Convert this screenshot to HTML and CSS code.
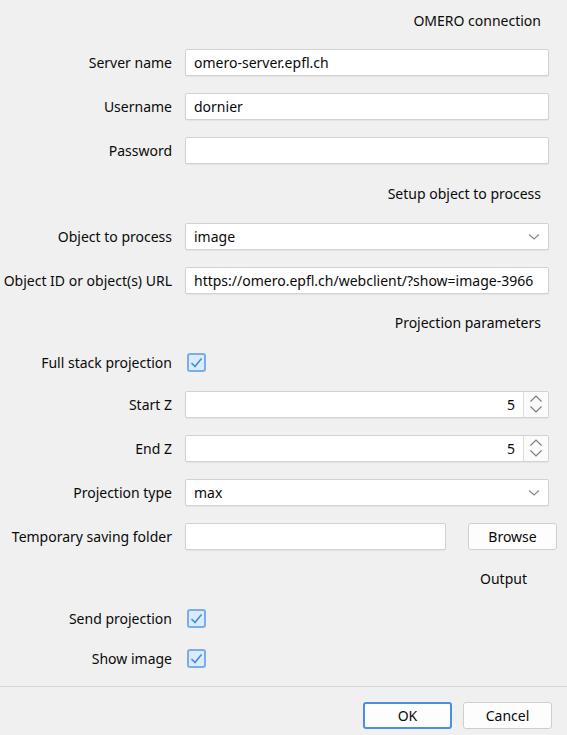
FILE: index.html
```html
<!DOCTYPE html>
<html lang="en">
<head>
  <meta charset="UTF-8" />
  <title>OMERO projection</title>
  <link rel="stylesheet" href="styles.css">
</head>
<body>
  <div class="panel">
    <div class="heading">OMERO connection</div>

    <div class="row">
      <label for="server">Server name</label>
      <input id="server" class="field" value="omero-server.epfl.ch" />
    </div>
    <div class="row">
      <label for="user">Username</label>
      <input id="user" class="field" value="dornier" />
    </div>
    <div class="row">
      <label for="pass">Password</label>
      <input id="pass" class="field" type="password" value="" />
    </div>

    <div class="heading heading-tall">Setup object to process</div>

    <div class="row">
      <label>Object to process</label>
      <div class="field select">
        <span>image</span>
        <svg class="chevron" width="12" height="8" viewBox="0 0 12 8"><path d="M1 1.5 L6 6 L11 1.5" fill="none" stroke="#8a8a8a" stroke-width="1.2"/></svg>
      </div>
    </div>
    <div class="row">
      <label for="url">Object ID or object(s) URL</label>
      <input id="url" class="field" value="https://omero.epfl.ch/webclient/?show=image-3966" />
    </div>

    <div class="heading">Projection parameters</div>

    <div class="row row-check">
      <label>Full stack projection</label>
      <span class="check"><svg width="13" height="11" viewBox="0 0 13 11"><path d="M1.5 6 L5 9.5 L11.5 1.5" fill="none" stroke="#3d8ee6" stroke-width="1.6"/></svg></span>
    </div>
    <div class="row">
      <label>Start Z</label>
      <div class="field spinner">
        <span class="num">5</span>
        <span class="spin-btn">
          <svg width="14" height="22" viewBox="0 0 14 22"><path d="M1.5 8.5 L7 3 L12.5 8.5 M1.5 13.5 L7 19 L12.5 13.5" fill="none" stroke="#7a7a7a" stroke-width="1.1"/></svg>
        </span>
      </div>
    </div>
    <div class="row">
      <label>End Z</label>
      <div class="field spinner">
        <span class="num">5</span>
        <span class="spin-btn">
          <svg width="14" height="22" viewBox="0 0 14 22"><path d="M1.5 8.5 L7 3 L12.5 8.5 M1.5 13.5 L7 19 L12.5 13.5" fill="none" stroke="#7a7a7a" stroke-width="1.1"/></svg>
        </span>
      </div>
    </div>
    <div class="row">
      <label>Projection type</label>
      <div class="field select">
        <span>max</span>
        <svg class="chevron" width="12" height="8" viewBox="0 0 12 8"><path d="M1 1.5 L6 6 L11 1.5" fill="none" stroke="#8a8a8a" stroke-width="1.2"/></svg>
      </div>
    </div>
    <div class="row">
      <label for="folder">Temporary saving folder</label>
      <div class="folder">
        <input id="folder" class="field" value="" />
        <button class="btn">Browse</button>
      </div>
    </div>

    <div class="heading heading-output">Output</div>

    <div class="row row-check">
      <label>Send projection</label>
      <span class="check"><svg width="13" height="11" viewBox="0 0 13 11"><path d="M1.5 6 L5 9.5 L11.5 1.5" fill="none" stroke="#3d8ee6" stroke-width="1.6"/></svg></span>
    </div>
    <div class="row row-check">
      <label>Show image</label>
      <span class="check"><svg width="13" height="11" viewBox="0 0 13 11"><path d="M1.5 6 L5 9.5 L11.5 1.5" fill="none" stroke="#3d8ee6" stroke-width="1.6"/></svg></span>
    </div>
  </div>

  <div class="footer">
    <button class="btn btn-default">OK</button>
    <button class="btn">Cancel</button>
  </div>
</body>
</html>
```

FILE: styles.css
```css
body {
  margin: 0;
  background: #f0f0f0;
  font-family: "Noto Sans", "Open Sans", sans-serif;
  font-size: 14px;
  color: #0a0a0a;
  width: 567px;
  height: 735px;
  overflow: hidden;
}

.panel {
  padding: 0 18px 8px 0;
  display: flex;
  flex-direction: column;
}

.heading {
  height: 40px;
  display: flex;
  align-items: center;
  justify-content: flex-end;
  padding-right: 8px;
}

.heading-tall {
  height: 42px;
}

.heading-output {
  padding-right: 22px;
}

.row {
  height: 44px;
  display: grid;
  grid-template-columns: 172px 1fr;
  column-gap: 13px;
  align-items: center;
}

.row-check {
  height: 40px;
}

.row label {
  text-align: right;
  white-space: nowrap;
}

.field {
  box-sizing: border-box;
  height: 27px;
  width: 100%;
  margin: 0;
  padding: 0 8px;
  border: 1px solid #d2d2d2;
  border-radius: 2px;
  background: #fff;
  font: inherit;
  color: #0a0a0a;
  box-shadow: 0 1px 1px rgba(0, 0, 0, 0.05);
  outline: none;
}

.select {
  display: flex;
  align-items: center;
  justify-content: space-between;
  padding-right: 8px;
}

.chevron {
  margin-top: 1px;
}

.spinner {
  display: flex;
  align-items: center;
  padding: 0;
}

.spinner .num {
  flex: 1;
  text-align: right;
  padding-right: 8px;
}

.spin-btn {
  width: 24px;
  height: 100%;
  border-left: 1px solid #dcdcdc;
  background: #fbfbfb;
  display: flex;
  align-items: center;
  justify-content: center;
}

.check {
  box-sizing: border-box;
  width: 19px;
  height: 19px;
  margin-left: 2px;
  border: 2px solid #7aaee8;
  border-radius: 3px;
  background: #dcebfa;
  display: flex;
  align-items: center;
  justify-content: center;
}

.folder {
  display: flex;
  align-items: center;
  gap: 22px;
  margin-right: -8px;
}

.folder .field {
  width: 261px;
  flex: none;
}

.btn {
  box-sizing: border-box;
  width: 89px;
  height: 27px;
  margin: 0;
  padding: 0;
  border: 1px solid #cfcfcf;
  border-radius: 3px;
  background: #fdfdfd;
  font: inherit;
  color: #0a0a0a;
}

.btn-default {
  border: 2px solid #4a90e2;
}

.footer {
  border-top: 1px solid #d6d6d6;
  display: flex;
  justify-content: flex-end;
  gap: 11px;
  padding: 15px 15px 0 0;
}
```
